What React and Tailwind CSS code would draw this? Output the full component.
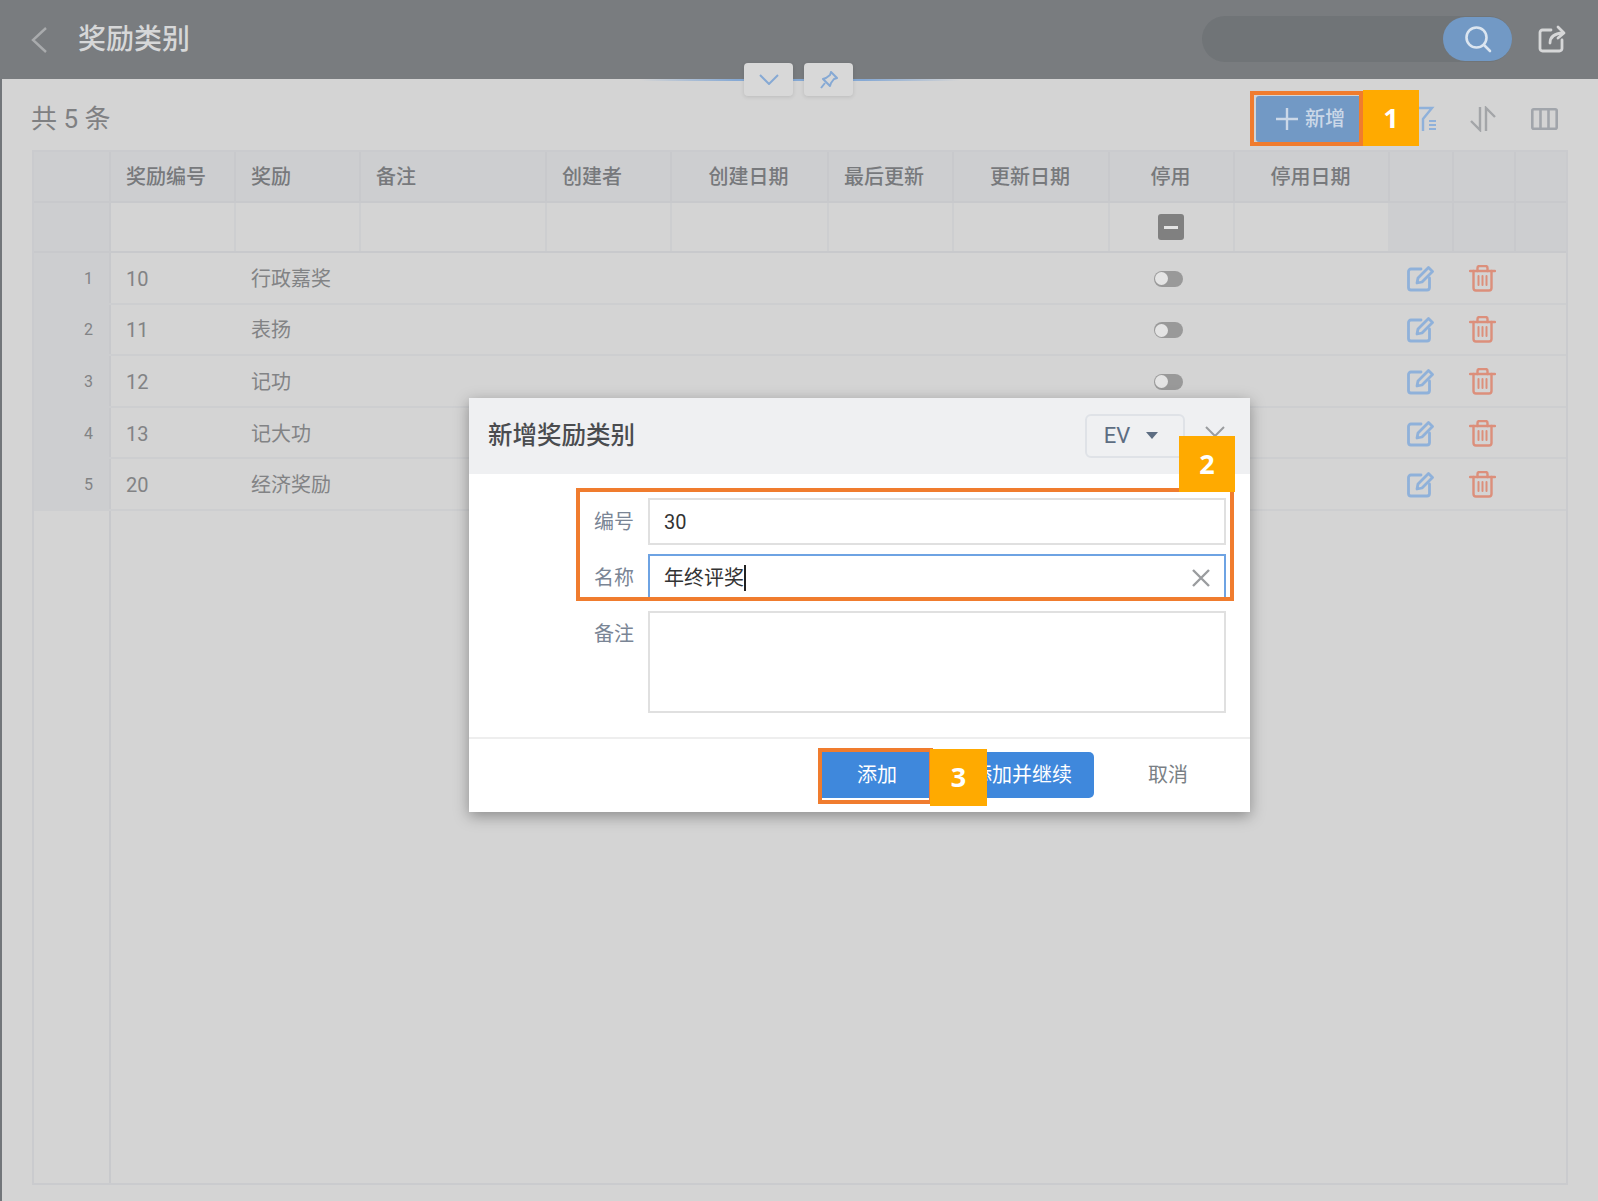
import React from "react";

const cols =
	"grid grid-cols-[77px_125px_125px_186px_125px_157px_125px_156px_125px_155px_64px_62px_1fr]";

const heads = [
	{ text: "奖励编号" },
	{ text: "奖励" },
	{ text: "备注" },
	{ text: "创建者" },
	{ text: "创建日期", center: true },
	{ text: "最后更新" },
	{ text: "更新日期", center: true },
	{ text: "停用", center: true },
	{ text: "停用日期", center: true },
];

const rows = [
	{ no: 1, code: "10", name: "行政嘉奖" },
	{ no: 2, code: "11", name: "表扬" },
	{ no: 3, code: "12", name: "记功" },
	{ no: 4, code: "13", name: "记大功" },
	{ no: 5, code: "20", name: "经济奖励" },
];

const EditIcon = () => (
	<svg width="27" height="27" viewBox="0 0 27 27" fill="none" stroke="#8fb1da" strokeWidth="2.800" strokeLinecap="round" strokeLinejoin="round">
		<path d="M14 4H4a2.500 2.500 0 0 0-2.500 2.500v16A2.500 2.500 0 0 0 4 25h16a2.500 2.500 0 0 0 2.500-2.500V13" />
		<path d="M10 18l1-5L21.500 2.500l4 4L15 17z" />
	</svg>
);

const TrashIcon = () => (
	<svg width="27" height="27" viewBox="0 0 27 27" fill="none" stroke="#dc8f7b" strokeWidth="2.400" strokeLinecap="round" strokeLinejoin="round">
		<path d="M1 6h25" />
		<path d="M8.500 6V3a2 2 0 0 1 2-2h6a2 2 0 0 1 2 2v3" />
		<path d="M4.500 6v17a2.500 2.500 0 0 0 2.500 2.500h13a2.500 2.500 0 0 0 2.500-2.500V6" />
		<path d="M9.500 11v9M13.500 11v9M17.500 11v9" strokeWidth="2" />
	</svg>
);

const Toggle = () => (
	<div className="ml-[-8px] flex h-[16px] w-[29px] items-center rounded-full bg-[#999999]">
		<div className="ml-[1px] h-[13px] w-[13px] rounded-full bg-[#e4e4e4]" />
	</div>
);

const Callout = ({ className, children }) => (
	<div className={`absolute flex items-center justify-center bg-[#ffaa00] font-['Open_Sans',sans-serif] text-[27px] font-bold text-white ${className}`}>
		{children}
	</div>
);

const Header = () => (
	<div className="flex h-[79px] shrink-0 items-center bg-[#797c7f] pl-[30px] pr-[32px]">
		<svg width="18" height="28" viewBox="0 0 18 28" fill="none" stroke="#a9abad" strokeWidth="2.400">
			<path d="M16 2L3 14l13 12" />
		</svg>
		<div className="ml-[30px] text-[28px] font-medium leading-none text-[#d6d7d8]">奖励类别</div>
		<div className="mb-[2px] ml-auto flex h-[46px] w-[310px] items-center justify-end rounded-full bg-[#707477]">
			<div className="flex h-[44px] w-[69px] items-center justify-center rounded-full bg-[#7299c5]">
				<svg width="28" height="28" viewBox="0 0 28 28" fill="none" stroke="#dbe5f0" strokeWidth="2.600" strokeLinecap="round">
					<circle cx="12.500" cy="12.500" r="10" />
					<path d="M20 20l6 6" />
				</svg>
			</div>
		</div>
		<svg className="mb-[2px] ml-[26px]" width="28" height="28" viewBox="0 0 28 28" fill="none" stroke="#d6d7d8" strokeWidth="2.800" strokeLinecap="round" strokeLinejoin="round">
			<path d="M13 5H4.500A2.500 2.500 0 0 0 2 7.500v16A2.500 2.500 0 0 0 4.500 26h17a2.500 2.500 0 0 0 2.500-2.500V15" />
			<path d="M12 18c0-6 4-9.500 13-10" />
			<path d="M20 2l6 6-6 5" />
		</svg>
	</div>
);

const Toolbar = () => (
	<div className="flex h-[71px] shrink-0 items-center pl-[29px] pr-[40px] pt-[8px]">
		<div className="text-[26px] leading-none text-[#7f8082]">共 5 条</div>
		<div className="ml-auto flex h-[46px] w-[108px] items-center justify-center gap-[6px] rounded-[3px] bg-[#7299c5] text-[20px] font-medium text-[#cbd8e8]">
			<svg width="24" height="24" viewBox="0 0 24 24" fill="none" stroke="#cbd8e8" strokeWidth="2.400">
				<path d="M12 1v22M1 12h22" />
			</svg>
			新增
		</div>
		<svg className="ml-[46px]" width="26" height="26" viewBox="0 0 26 26" fill="none" stroke="#8fb1da" strokeWidth="2.400">
			<path d="M0 2h22l-9 11v12" />
			<path d="M19 15h7M19 19h7M19 23h7" strokeWidth="2" />
		</svg>
		<svg className="ml-[33px]" width="28" height="26" viewBox="0 0 28 26" fill="none" stroke="#a3a5a8" strokeWidth="2.400">
			<path d="M11 1v23L2 15" />
			<path d="M17 25V2l9 9" />
		</svg>
		<svg className="ml-[34px]" width="27" height="22" viewBox="0 0 27 22" fill="none" stroke="#a1a5ab" strokeWidth="2.600">
			<rect x="1.300" y="1.300" width="24.400" height="19.400" rx="1.500" />
			<path d="M9.500 1v20M17.500 1v20" />
		</svg>
	</div>
);

const Table = () => (
	<div className="mb-[16px] ml-[30px] mr-[30px] flex flex-1 flex-col border-2 border-[#cacbce]">
		<div className={`${cols} h-[51px] shrink-0 border-b-2 border-[#c8c9cc] bg-[#cdced0] text-[20px] font-medium text-[#77797c]`}>
			<div className="border-r-2 border-[#c8c9cc]" />
			{heads.map((h) => (
				<div
					key={h.text}
					className={`flex items-center border-r-2 border-[#c8c9cc] ${h.center ? "justify-center pr-[2px]" : "pl-[15px]"}`}
				>
					{h.text}
				</div>
			))}
			<div className="border-r-2 border-[#c8c9cc]" />
			<div className="border-r-2 border-[#c8c9cc]" />
			<div />
		</div>
		<div className={`${cols} h-[50px] shrink-0 border-b-2 border-[#c8c9cc]`}>
			<div className="border-r-2 border-[#c8c9cc] bg-[#cdced0]" />
			{heads.map((h) => (
				<div key={h.text} className="flex items-center justify-center border-r-2 border-[#cdced0] pr-[2px]">
					{h.text === "停用" && (
						<div className="flex h-[26px] w-[26px] items-center justify-center rounded-[3px] bg-[#808080]">
							<div className="h-[3px] w-[14px] bg-[#e4e4e4]" />
						</div>
					)}
				</div>
			))}
			<div className="border-r-2 border-[#c8c9cc] bg-[#cdced0]" />
			<div className="border-r-2 border-[#c8c9cc] bg-[#cdced0]" />
			<div className="bg-[#cdced0]" />
		</div>
		{rows.map((r) => (
			<div key={r.no} className={`${cols} h-[51.600px] shrink-0 border-b-2 border-[#cdced0] text-[20px] text-[#828385]`}>
				<div className="flex items-center justify-end border-r-2 border-[#c8c9cc] bg-[#cdced0] pr-[16px] pt-[2px] text-[16px]">
					{r.no}
				</div>
				<div className="flex items-center pl-[15px] pt-[2px]">{r.code}</div>
				<div className="flex items-center pl-[15px] pt-[2px]">{r.name}</div>
				<div />
				<div />
				<div />
				<div />
				<div />
				<div className="flex items-center justify-center pt-[2px]">
					<Toggle />
				</div>
				<div />
				<div className="flex items-center justify-center pr-[3px] pt-[1px]">
					<EditIcon />
				</div>
				<div className="flex items-center justify-center pr-[5px] pt-[1px]">
					<TrashIcon />
				</div>
				<div />
			</div>
		))}
		<div className="flex flex-1">
			<div className="w-[77px] border-r-2 border-[#c8c9cc]" />
		</div>
	</div>
);

const Modal = () => (
	<div className="absolute left-[469px] top-[398px] flex h-[414px] w-[781px] flex-col bg-white shadow-[0_4px_14px_rgba(0,0,0,0.35)]">
		<div className="flex h-[76px] shrink-0 items-center bg-[#eff0f2] pl-[19px]">
			<div className="text-[24.500px] font-medium leading-none text-[#4a4c4f]">新增奖励类别</div>
			<div className="ml-[auto] flex h-[44px] w-[100px] items-center justify-center gap-[16px] rounded-[6px] border-2 border-[#dfe2e7] pb-[2px] pr-[8px] text-[22px] text-[#5d6d82]">
				EV
				<svg width="12" height="7" viewBox="0 0 12 7" fill="#5d6d82">
					<path d="M0 0h12L6 7z" />
				</svg>
			</div>
			<svg className="ml-[20px] mr-[25px]" width="20" height="20" viewBox="0 0 20 20" fill="none" stroke="#9a9c9f" strokeWidth="2">
				<path d="M1 1l18 18M19 1L1 19" />
			</svg>
		</div>
		<div className="flex flex-1 flex-col gap-[9px] pl-[99px] pr-[24px] pt-[24px] text-[20px]">
			<div className="flex items-center">
				<div className="w-[80px] pr-[14px] text-right text-[#7a8595]">编号</div>
				<div className="flex h-[47px] flex-1 items-center border-2 border-[#e0e0e0] pl-[14px] text-[#333333]">30</div>
			</div>
			<div className="flex items-center">
				<div className="w-[80px] pr-[14px] text-right text-[#7a8595]">名称</div>
				<div className="flex h-[47px] flex-1 items-center border-2 border-[#6ea3e3] pl-[14px] text-[#333333]">
					年终评奖
					<span className="h-[26px] w-[2px] bg-[#222222]" />
					<svg className="ml-auto mr-[13px]" width="20" height="20" viewBox="0 0 20 20" fill="none" stroke="#9a9c9f" strokeWidth="2.400">
						<path d="M2 2l16 16M18 2L2 18" />
					</svg>
				</div>
			</div>
			<div className="mt-[1px] flex items-start">
				<div className="w-[80px] pr-[14px] pt-[8px] text-right text-[#7a8595]">备注</div>
				<div className="h-[102px] flex-1 border-2 border-[#e0e0e0]" />
			</div>
		</div>
		<div className="flex h-[75px] shrink-0 items-start justify-end border-t-2 border-[#eeeeee] pr-[62px] pt-[13px] text-[20px] text-white">
			<div className="flex h-[46px] w-[110px] items-center justify-center bg-[#3f88dc]">添加</div>
			<div className="ml-[18px] flex h-[46px] w-[144px] items-center justify-center rounded-[5px] bg-[#3f88dc]">添加并继续</div>
			<div className="ml-[54px] flex h-[46px] w-[40px] items-center justify-center whitespace-nowrap text-[#7a7f85]">取消</div>
		</div>
	</div>
);

export default function App() {
	return (
		<div className="relative flex h-[1201px] w-[1598px] flex-col overflow-hidden bg-[#d4d4d4] font-['Roboto','Noto_Sans_CJK_SC',sans-serif]">
			<Header />
			<div className="flex flex-1 flex-col border-l-2 border-[#72767a]">
				<Toolbar />
				<Table />
			</div>

			{/* header tabs */}
			<div className="absolute left-[640px] top-[79px] h-[2px] w-[320px] bg-[linear-gradient(90deg,transparent,#86a9d4_30%,#86a9d4_70%,transparent)]" />
			<div className="absolute left-[744px] top-[63px] flex h-[33px] w-[49px] items-center justify-center rounded-[4px] bg-[#d8d8d8] shadow-[0_1px_4px_rgba(0,0,0,0.12)]">
				<svg width="20" height="11" viewBox="0 0 20 11" fill="none" stroke="#86a9d4" strokeWidth="2">
					<path d="M1 1l9 9 9-9" />
				</svg>
			</div>
			<div className="absolute left-[804px] top-[63px] flex h-[33px] w-[49px] items-center justify-center rounded-[4px] bg-[#d8d8d8] shadow-[0_1px_4px_rgba(0,0,0,0.12)]">
				<svg width="18" height="18" viewBox="0 0 18 18" fill="none" stroke="#86a9d4" strokeWidth="2" strokeLinejoin="round">
					<path d="M11 1l6 6-3 1-3 4-1 3-7-7 3-1 4-3z" />
					<path d="M5 12l-4 5" />
				</svg>
			</div>

			<Modal />

			{/* step markers */}
			<div className="absolute left-[1250px] top-[91px] h-[55px] w-[113px] border-4 border-[#f07c2e]" />
			<Callout className="left-[1363px] top-[90px] h-[56px] w-[56px]">1</Callout>
			<div className="absolute left-[576px] top-[488px] h-[113px] w-[658px] border-4 border-[#f07c2e]" />
			<Callout className="left-[1179px] top-[436px] h-[56px] w-[56px]">2</Callout>
			<div className="absolute left-[818px] top-[748px] h-[56px] w-[115px] border-4 border-[#f07c2e]" />
			<Callout className="left-[930px] top-[749px] h-[57px] w-[57px]">3</Callout>
		</div>
	);
}
